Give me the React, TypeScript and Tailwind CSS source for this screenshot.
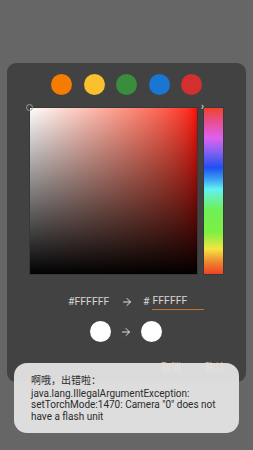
import { ArrowRight } from 'lucide-react'

const swatches = ['#f57c00', '#fbc02d', '#388e3c', '#1976d2', '#d32f2f']

export default function App() {
  return (
    <div className="relative h-[450px] w-[253px] overflow-hidden bg-[#666666] pt-[63px] font-['Roboto','Noto_Sans_CJK_SC',sans-serif]">
      <div className="mx-[7px] h-[319px] rounded-[9px] bg-[#424242] px-[22px] pt-[11px]">
        <div className="flex justify-center gap-[11.5px]">
          {swatches.map((c) => (
            <div key={c} className="h-[21px] w-[21px] rounded-full" style={{ backgroundColor: c }} />
          ))}
        </div>

        <div className="mt-[12px] flex gap-[5px]">
          <div className="relative h-[168px] w-[169px] shrink-0">
            <div className="absolute inset-0 bg-linear-to-r from-white to-[#ff0000]" />
            <div className="absolute inset-0 bg-linear-to-b from-transparent to-black" />
            <div className="absolute inset-0 border border-[#383838]" />
            <div className="absolute -left-[3px] -top-[3px] h-[7px] w-[7px] rounded-full border border-[#9a9a9a]" />
            <div className="absolute -right-[6px] -top-[5px] text-[10px] font-bold leading-none text-[#cfcfcf]">&rsaquo;</div>
          </div>
          <div className="h-[168px] w-[21px] shrink-0 border border-[#3a3a3a] bg-[linear-gradient(to_bottom,#f04428_0%,#e84e8e_8%,#e060f0_18%,#8a62f0_26%,#2050f2_36%,#3ca2f2_43%,#62f2f2_49%,#6ef058_61%,#7ef040_75%,#f4e442_85%,#f08430_93%,#f04222_100%)]" />
        </div>

        <div className="mt-[19px] flex items-center text-[10.5px] text-[#d6d6d6]">
          <span className="ml-[39px] w-[37px] shrink-0">#FFFFFF</span>
          <ArrowRight className="ml-[16px] h-[12px] w-[12px] shrink-0 text-[#e0e0e0]" strokeWidth={2} />
          <span className="ml-[10px]">#</span>
          <span className="ml-[3px] w-[52px] shrink-0 border-b border-[#c47424] pb-[2px] leading-[13px]">FFFFFF</span>
        </div>

        <div className="mt-[11px] flex items-center">
          <div className="ml-[61px] h-[21px] w-[21px] shrink-0 rounded-full bg-white" />
          <ArrowRight className="ml-[9px] h-[12px] w-[12px] shrink-0 text-[#e0e0e0]" strokeWidth={2} />
          <div className="ml-[9px] h-[21px] w-[21px] shrink-0 rounded-full bg-white" />
        </div>

        <div className="mt-[20px] flex whitespace-nowrap text-[10px] leading-[12px] text-[#f0b070]">
          <span className="ml-[132px] shrink-0">取消</span>
          <span className="ml-[24px] shrink-0">确认</span>
        </div>
      </div>

      <div className="absolute left-[14px] top-[363px] h-[70px] w-[225px] rounded-[13px] bg-[#e4e4e4]/95 pl-[17px] pr-[4px] pt-[12px] text-[10px] leading-[11.7px] text-[#2b2b2b]">
        <div className="mb-[1px]">啊哦，出错啦：</div>
        <div>java.lang.IllegalArgumentException:</div>
        <div>setTorchMode:1470: Camera "0" does not</div>
        <div>have a flash unit</div>
      </div>
    </div>
  )
}
